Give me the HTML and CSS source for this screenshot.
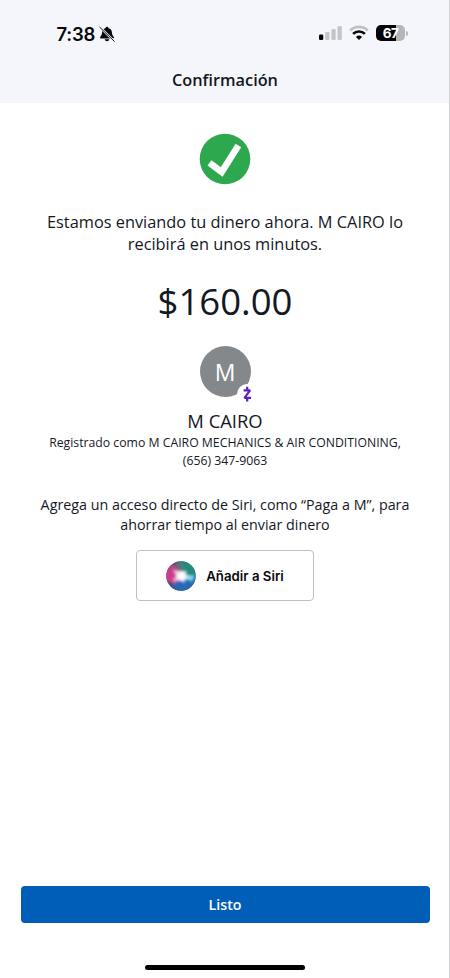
FILE: index.html
```html
<!DOCTYPE html>
<html lang="es">
<head>
<meta charset="utf-8">
<title>Confirmación</title>
<link rel="stylesheet" href="styles.css">
</head>
<body>
<div class="screen">
  <header class="header">
    <div class="status">
      <span class="time">7:38</span>
      <svg class="bell" width="16" height="16" viewBox="0 0 16 16">
        <path d="M8 .8c-.8 0-1.300.5-1.400 1.200C4.500 2.600 3.200 4.300 3.100 6.300 3 9 2 9.800 1.200 11c-.4.700 0 1.500.7 1.500h12.200c.7 0 1.100-.8.7-1.500-.8-1.200-1.800-2-1.900-4.700-.1-2-1.400-3.700-3.500-4.300C9.300 1.300 8.800.8 8 .8zM5.700 13.300c.2 1.200 1.100 2 2.300 2s2.100-.8 2.300-2z" fill="#08090c"/>
        <path d="M1 1.300l14 13.700" stroke="#f5f6fb" stroke-width="2.200"/>
        <path d="M.8 1.300l14.500 14" stroke="#17181b" stroke-width="1" stroke-linecap="round"/>
      </svg>
      <div class="indicators">
        <svg width="24" height="16" viewBox="0 0 24 16">
          <rect x="0" y="9.500" width="4.300" height="5.500" rx="1.300" fill="#050505"/>
          <rect x="6.200" y="7" width="4.300" height="8" rx="1.300" fill="#c4c5c9"/>
          <rect x="12.400" y="4" width="4.300" height="11" rx="1.300" fill="#c4c5c9"/>
          <rect x="18.500" y="1" width="4.300" height="14" rx="1.300" fill="#c4c5c9"/>
        </svg>
        <svg class="wifi" width="20" height="16" viewBox="0 0 20 16" fill="none">
          <path d="M1.200 5.500a12.500 12.500 0 0 1 17.600 0" stroke="#bfc0c4" stroke-width="2.600"/>
          <path d="M4.100 8.900a8.400 8.400 0 0 1 11.800 0" stroke="#08090a" stroke-width="2.700"/>
          <path d="M6.900 12a4.600 4.600 0 0 1 6.200 0L10 15z" fill="#08090a"/>
        </svg>
        <div class="battery">67</div><i class="battery-tip"></i>
      </div>
    </div>
    <h1 class="title">Confirmación</h1>
  </header>
  <main class="content">
    <svg class="success" width="52" height="52" viewBox="0 0 52 52">
      <circle cx="26" cy="26" r="25.300" fill="#2ea84f"/>
      <path d="M10.500 29.800l12.200 9.200 16.700-26.500" fill="none" stroke="#fff" stroke-width="6.600"/>
    </svg>
    <p class="message">Estamos enviando tu dinero ahora. M CAIRO lo<br>recibirá en unos minutos.</p>
    <div class="amount">$160.00</div>
    <div class="avatar">M
      <svg class="badge" width="20" height="20" viewBox="0 0 20 20">
        <circle cx="10" cy="10" r="10" fill="#fff"/>
        <path d="M6.600 6.300h6.500L7.500 13.800h6.600M10.200 2.800V6.500M10.200 13.800v3.600" fill="none" stroke="#5f20bd" stroke-width="2.200" stroke-linejoin="bevel"/>
      </svg>
    </div>
    <h2 class="name">M CAIRO</h2>
    <p class="registered">Registrado como M CAIRO MECHANICS &amp; AIR CONDITIONING,<br>(656) 347-9063</p>
    <p class="hint">Agrega un acceso directo de Siri, como “Paga a M”, para<br>ahorrar tiempo al enviar dinero</p>
    <button class="siri">
      <svg width="30" height="30" viewBox="0 0 30 30">
        <defs>
          <clipPath id="orb"><circle cx="15" cy="15" r="14.700"/></clipPath>
          <filter id="soft" x="-50%" y="-50%" width="200%" height="200%"><feGaussianBlur stdDeviation="1.800"/></filter>
          <filter id="glow" x="-50%" y="-50%" width="200%" height="200%"><feGaussianBlur stdDeviation="1.800"/></filter>
        </defs>
        <g clip-path="url(#orb)">
          <rect width="30" height="30" fill="#354c78"/>
          <g filter="url(#soft)">
            <path d="M11 0h19v15L16 13z" fill="#248c7b"/>
            <path d="M-2 7l9-4 9 11-5 9-13-3z" fill="#ce3b88"/>
            <path d="M9 2l7 1-1 10-7-4z" fill="#786277"/>
            <path d="M30 15v12l-13 6L5 26l10-10z" fill="#2567b3"/>
            <path d="M17 15l12-1-3 7z" fill="#5bc7df"/>
          </g>
          <path d="M7 9l8 1 6 0-1 4 8 3-8 1-2 4-5-3-7 2 4-6z" fill="#fff" opacity=".75" filter="url(#glow)"/>
          <circle cx="15.500" cy="15" r="4" fill="#fff" filter="url(#glow)"/>
        </g>
      </svg>
      <span>Añadir a Siri</span>
    </button>
  </main>
  <footer class="footer">
    <button class="done">Listo</button>
    <div class="home"></div>
  </footer>
</div>
</body>
</html>
```
FILE: styles.css
```css
* { box-sizing: border-box; }
body { margin: 0; background: #fff; color: #14181f; font-family: "Open Sans", "Noto Sans", sans-serif; }
h1, h2, p { margin: 0; font-weight: 400; }
p { white-space: nowrap; }
button { font: inherit; padding: 0; }
.screen { width: 450px; height: 978px; display: flex; flex-direction: column; background: linear-gradient(270deg, #d4d5d8 1px, #fff 1px); overflow: hidden; }
.header { height: 103px; margin-right: 1px; background: #f5f6fb; }
.status { height: 66px; display: flex; align-items: center; padding: 0 41px 0 56.500px; }
.time { font: 600 18.500px/24px Inter, sans-serif; color: #08090c; width: 39px; letter-spacing: -.2px; margin-top: 1px; }
.bell { margin-left: 3px; margin-top: 1px; }
.indicators { margin-left: auto; display: flex; align-items: center; }
.wifi { margin: 0 7px 0 6px; }
.battery { width: 29px; height: 16px; border-radius: 5px; background: linear-gradient(90deg, #050505 68%, #b5b6ba 68%); color: #fff; font: 700 13.500px/16px Inter, sans-serif; text-align: center; letter-spacing: -.5px; }
.battery-tip { width: 2px; height: 5px; margin-left: 1px; border-radius: 0 2px 2px 0; background: #b5b6ba; }
.title { font-size: 16.300px; line-height: 29px; font-weight: 600; text-align: center; padding-left: 1px; }
.content { flex: 1; display: flex; flex-direction: column; align-items: center; text-align: center; padding-top: 30px; }
.message { margin-top: 26px; font-size: 16.350px; line-height: 22px; }
.amount { margin-top: 20px; font-size: 36.500px; line-height: 52px; }
.avatar { position: relative; width: 51px; height: 51px; margin-top: 19px; border-radius: 50%; background: #85888a; color: #fff; font-size: 23px; line-height: 52px; }
.badge { position: absolute; left: 37.500px; top: 38px; }
.name { margin-top: 11px; font-size: 18.400px; line-height: 26px; }
.registered { font-size: 12.250px; line-height: 18px; }
.hint { margin-top: 25px; font-size: 14.300px; line-height: 19.500px; }
.siri { width: 178px; height: 51px; margin-top: 16px; display: flex; align-items: center; justify-content: center; gap: 10px; border: 1px solid #c0c0c3; border-radius: 4px; background: #fff; color: #08090b; font: 600 13.250px/20px Inter, sans-serif; }
.footer { height: 92px; display: flex; flex-direction: column; align-items: center; }
.done { width: 409px; height: 37px; border: 0; border-radius: 4px; background: #005eb8; color: #fff; font-size: 14.200px; font-weight: 600; }
.home { width: 160px; height: 5px; margin-top: 42px; border-radius: 3px; background: #000; }
```
